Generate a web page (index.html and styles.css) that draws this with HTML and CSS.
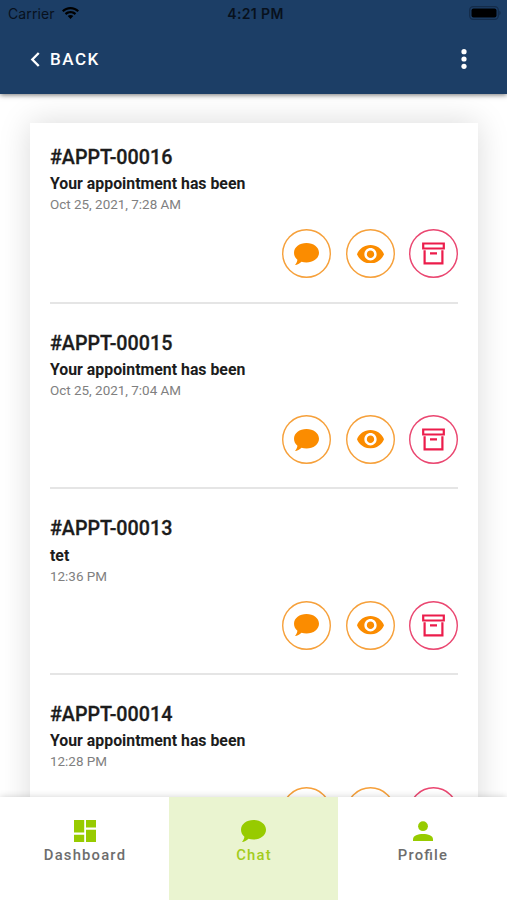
FILE: index.html
```html
<!DOCTYPE html>
<html lang="en">
<head>
<meta charset="utf-8">
<title>Appointments</title>
<link rel="stylesheet" href="styles.css">
</head>
<body>
<svg class="defs" aria-hidden="true">
  <symbol id="chat" viewBox="0 0 25 22"><path d="M12.5 0C19.4 0 25 4.200 25 9.700S19.400 19.500 12.500 19.500c-1.800 0-3.500-.3-5-.8C5.500 20.500 3.400 21.700 1 22c1.300-1.400 2.200-3.200 2.400-5.200C1.300 15 0 12.500 0 9.700 0 4.200 5.600 0 12.500 0z"/></symbol>
  <symbol id="eye" viewBox="1 4.500 22 15"><path d="M12 4.500C7 4.500 2.730 7.610 1 12c1.730 4.390 6 7.500 11 7.500s9.270-3.110 11-7.500c-1.730-4.390-6-7.500-11-7.500zM12 17c-2.760 0-5-2.240-5-5s2.240-5 5-5 5 2.240 5 5-2.240 5-5 5zm0-8c-1.660 0-3 1.340-3 3s1.340 3 3 3 3-1.340 3-3-1.340-3-3-3z"/></symbol>
  <symbol id="archive" viewBox="0 0 23 23"><path class="line" d="M1.200 1.500h20.600v5H1.200zM2.600 8.200v13.200h17.800V8.200M8 11.400h7"/></symbol>
</svg>
<div class="screen">
  <header class="header">
    <div class="status">
      <div class="carrier"><span>Carrier</span>
        <svg class="wifi" viewBox="0 0 17 12"><path d="M8.500 0C5.200 0 2.200 1.300 0 3.400l1.500 1.600c1.800-1.700 4.300-2.800 7-2.800s5.200 1.100 7 2.800L17 3.400C14.800 1.300 11.800 0 8.500 0zm0 4C6.300 4 4.300 4.900 2.800 6.300l1.500 1.600c1.100-1 2.600-1.700 4.200-1.700s3.100.7 4.200 1.700l1.500-1.600C12.700 4.900 10.700 4 8.500 4zm0 4c-1.100 0-2.100.4-2.800 1.100L8.500 12l2.800-2.900C10.600 8.400 9.600 8 8.500 8z"/></svg>
      </div>
      <div class="clock">4:21 PM</div>
      <div class="power"><svg class="battery" viewBox="0 0 32 14"><rect class="case" x=".7" y=".7" width="28.600" height="12.600" rx="3.500"/><rect x="2.500" y="2.500" width="25" height="9" rx="2"/><path class="tip" d="M30.300 4.800c1.700.6 1.700 3.800 0 4.400z"/></svg></div>
    </div>
    <div class="toolbar">
      <div class="back"><svg class="chevron" viewBox="0 0 9 14"><path d="M8 .9 2 7l6 6.100"/></svg><span>BACK</span></div>
      <svg class="more" viewBox="0 0 6 20"><circle cx="3" cy="2.700" r="2.600"/><circle cx="3" cy="10" r="2.600"/><circle cx="3" cy="17.300" r="2.600"/></svg>
    </div>
  </header>
  <main class="content">
    <div class="card">
      <section class="item">
        <h2>#APPT-00016</h2><h3>Your appointment has been</h3><p>Oct 25, 2021, 7:28 AM</p>
        <div class="actions"><span class="btn"><svg class="i-chat"><use href="#chat"/></svg></span><span class="btn"><svg class="i-eye"><use href="#eye"/></svg></span><span class="btn red"><svg class="i-archive"><use href="#archive"/></svg></span></div>
      </section>
      <section class="item">
        <h2>#APPT-00015</h2><h3>Your appointment has been</h3><p>Oct 25, 2021, 7:04 AM</p>
        <div class="actions"><span class="btn"><svg class="i-chat"><use href="#chat"/></svg></span><span class="btn"><svg class="i-eye"><use href="#eye"/></svg></span><span class="btn red"><svg class="i-archive"><use href="#archive"/></svg></span></div>
      </section>
      <section class="item">
        <h2>#APPT-00013</h2><h3>tet</h3><p>12:36 PM</p>
        <div class="actions"><span class="btn"><svg class="i-chat"><use href="#chat"/></svg></span><span class="btn"><svg class="i-eye"><use href="#eye"/></svg></span><span class="btn red"><svg class="i-archive"><use href="#archive"/></svg></span></div>
      </section>
      <section class="item">
        <h2>#APPT-00014</h2><h3>Your appointment has been</h3><p>12:28 PM</p>
        <div class="actions"><span class="btn"><svg class="i-chat"><use href="#chat"/></svg></span><span class="btn"><svg class="i-eye"><use href="#eye"/></svg></span><span class="btn red"><svg class="i-archive"><use href="#archive"/></svg></span></div>
      </section>
    </div>
  </main>
  <nav class="tabs">
    <div class="tab"><svg viewBox="0 0 24 24"><path d="M1 1h10.200v12.400H1zM13 1h10v7.400H13zM1 15.800h10.200V23H1zM13 10.800h10V23H13z"/></svg><span>Dashboard</span></div>
    <div class="tab active"><svg class="tab-chat"><use href="#chat"/></svg><span>Chat</span></div>
    <div class="tab"><svg viewBox="0 0 24 24"><circle cx="12" cy="7.200" r="4.900"/><path d="M2 22v-1.700c0-3.600 5-5.200 10-5.200s10 1.600 10 5.200V22z"/></svg><span>Profile</span></div>
  </nav>
</div>
</body>
</html>
```
FILE: styles.css
```css
* { box-sizing: border-box; }
body { margin: 0; font-family: Roboto, "Liberation Sans", sans-serif; background: #fff; }
svg { display: block; fill: currentColor; }
.defs { display: none; }
.screen { display: flex; flex-direction: column; width: 507px; height: 900px; overflow: hidden; }

.header { flex: none; height: 94px; background: #1c3e66; position: relative; z-index: 2; box-shadow: 0 1px 5px rgba(0, 0, 0, .55); }
.status { display: grid; grid-template-columns: 1fr auto 1fr; align-items: center; height: 27px; padding: 0 6px 0 8px; font-family: Inter, Roboto, sans-serif; color: #08111d; }
.carrier { display: flex; align-items: center; gap: 7px; font-size: 14px; letter-spacing: .1px; }
.wifi { width: 17px; height: 12px; color: #000; margin-top: -1px; }
.clock { font-size: 14px; font-weight: 600; letter-spacing: .35px; margin-left: 2px; }
.power { display: flex; justify-content: flex-end; }
.battery { width: 32px; height: 14px; color: #000; margin-top: -1px; }
.case { fill: none; stroke: #142c4a; stroke-width: 1.3; }
.tip { fill: #142c4a; }
.toolbar { display: flex; justify-content: space-between; align-items: center; height: 64px; padding: 0 40px 0 30px; color: #fff; }
.back { display: flex; align-items: center; gap: 10px; font-size: 17px; font-weight: 500; letter-spacing: 1.5px; }
.chevron { width: 10px; height: 15px; fill: none; stroke: currentColor; stroke-width: 2.2; }
.more { width: 6px; height: 20px; }

.content { flex: 1; min-height: 0; padding: 29px 29px 0 30px; overflow: hidden; }
.card { background: #fff; padding: 14px 20px; box-shadow: 0 0 30px rgba(0, 0, 0, .15); }
.item { height: 166.700px; padding-top: 8px; border-bottom: 2px solid #e5e5e5; }
.item + .item { margin-top: 19px; }
h2, h3, p { margin: 0; color: #1c1c1c; }
h2 { font-size: 19.700px; line-height: 25px; font-weight: 500; -webkit-text-stroke: .3px currentColor; }
h3 { font-size: 15.850px; line-height: 22px; font-weight: 700; margin-top: 3.300px; }
p { font-size: 13.450px; line-height: 20px; color: #808080; }
.actions { display: flex; justify-content: flex-end; gap: 14.500px; margin-top: 14.200px; }
.btn { display: flex; align-items: center; justify-content: center; width: 49px; height: 49px; box-shadow: inset 0 0 0 1.400px #f6a03a; border-radius: 50%; color: #fb8c00; }
.red { box-shadow: inset 0 0 0 1.400px #ea4670; color: #ec1c4b; }
.i-chat { width: 25px; height: 22px; }
.i-eye { width: 27px; height: 18.500px; }
.i-archive { width: 23px; height: 23px; }
.line { fill: none; stroke: currentColor; stroke-width: 2.200; }

.tabs { flex: none; display: grid; grid-template-columns: repeat(3, 1fr); height: 103px; background: #fff; position: relative; z-index: 2; box-shadow: 0 0 7px rgba(0, 0, 0, .18); }
.tab { display: flex; flex-direction: column; align-items: center; padding-top: 22px; gap: 3px; color: #97cb00; }
.tab svg { width: 24px; height: 24px; margin-left: 1px; }
.tab .tab-chat { width: 25px; height: 22px; margin: 1px 0; }
.tab span { font-size: 14.800px; line-height: 18px; font-weight: 500; letter-spacing: 1.200px; margin-left: 1px; color: #6d6d6d; font-feature-settings: "liga" 1; }
.tab.active { background: #eaf4d0; }
.tab.active span { color: #a3cc1c; }
```
